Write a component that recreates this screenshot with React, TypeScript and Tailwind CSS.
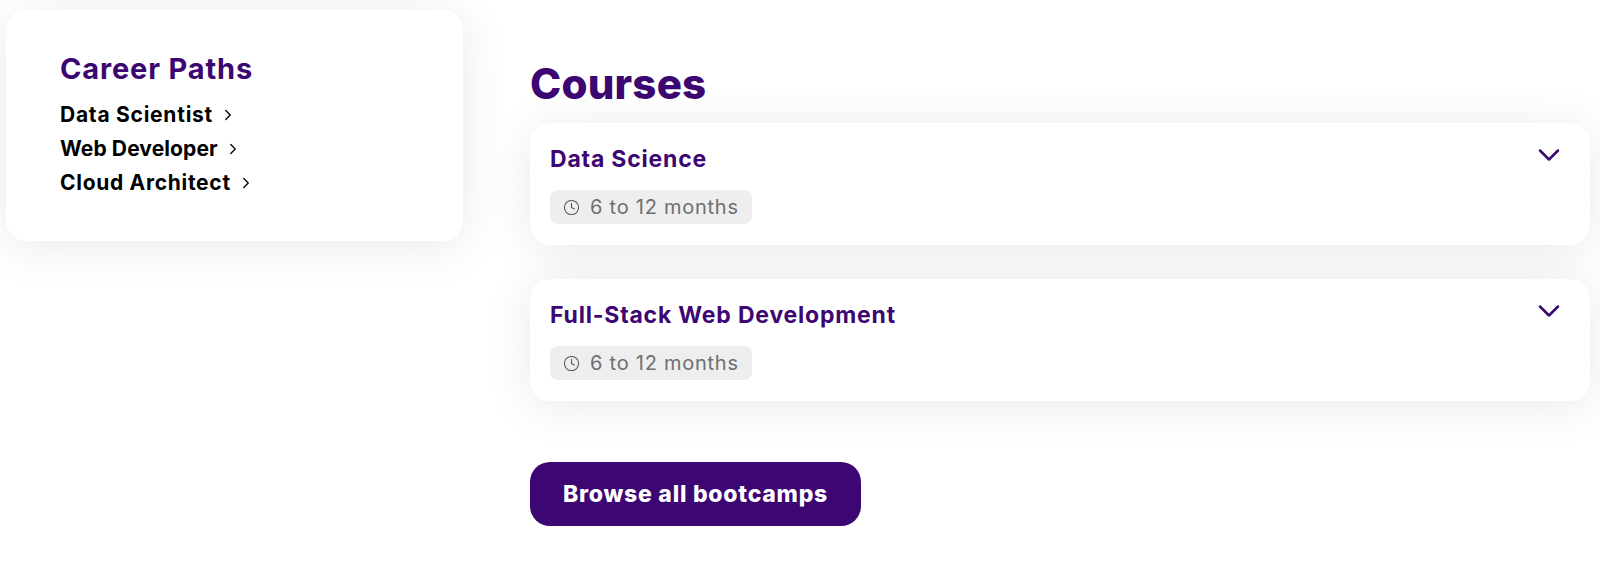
import React from "react";
import { ChevronRight, ChevronDown, Clock } from "lucide-react";

const paths = [
  { name: "Data Scientist", tracking: "tracking-[0.75px]" },
  { name: "Web Developer", tracking: "tracking-[0.1px]" },
  { name: "Cloud Architect", tracking: "tracking-[0.7px]" },
];
const courses = ["Data Science", "Full-Stack Web Development"];

const CourseCard: React.FC<{ title: string }> = ({ title }) => (
  <div className="h-[122px] rounded-[20px] bg-white shadow-[0_5px_50px_rgba(0,0,0,0.09)] pl-5 pr-[26px] pt-[21px] flex justify-between items-start">
    <div>
      <h3 className="text-[23px] leading-[30px] font-bold tracking-[0.8px] text-[#3c0673]">{title}</h3>
      <div className="mt-4 w-[202px] h-[34px] rounded-lg bg-[#eeeeee] flex items-center pl-[13px] gap-[10px] text-[#6f6f6f]">
        <Clock size={17} strokeWidth={1.5} className="text-[#555555]" />
        <span className="text-[20px] leading-none tracking-[0.75px]">6 to 12 months</span>
      </div>
    </div>
    <ChevronDown size={36} strokeWidth={1.7} className="text-[#3c0673] -mt-[7px] -mr-[3px]" />
  </div>
);

export default function App() {
  return (
    <div className="w-[1600px] h-[564px] overflow-hidden bg-white flex items-start pl-[6px] font-['Inter','Liberation_Sans',sans-serif]">
      {/* Sidebar */}
      <div className="w-[457px] h-[231px] mt-[10px] shrink-0 rounded-[20px] bg-white shadow-[0_5px_50px_rgba(0,0,0,0.09)] pl-[54px] pt-[41px]">
        <h2 className="text-[29px] leading-[36px] font-bold tracking-[0.85px] text-[#3c0673]">Career Paths</h2>
        <ul className="mt-[11px]">
          {paths.map((p) => (
            <li key={p.name} className={`flex items-center h-[34px] gap-[6px] text-[21px] font-bold text-black ${p.tracking}`}>
              {p.name}
              <ChevronRight size={18} strokeWidth={1.75} />
            </li>
          ))}
        </ul>
      </div>

      {/* Courses */}
      <div className="ml-[67px] w-[1060px] pt-[56px]">
        <h1 className="text-[42px] leading-[56px] font-extrabold tracking-[0.2px] text-[#3c0673]">Courses</h1>
        <div className="mt-[11px] flex flex-col gap-[34px]">
          {courses.map((c) => (
            <CourseCard key={c} title={c} />
          ))}
        </div>
        <button className="mt-[61px] w-[331px] h-[64px] rounded-[20px] bg-[#3c0673] text-white text-[23px] font-extrabold tracking-[0.75px]">
          Browse all bootcamps
        </button>
      </div>
    </div>
  );
}
